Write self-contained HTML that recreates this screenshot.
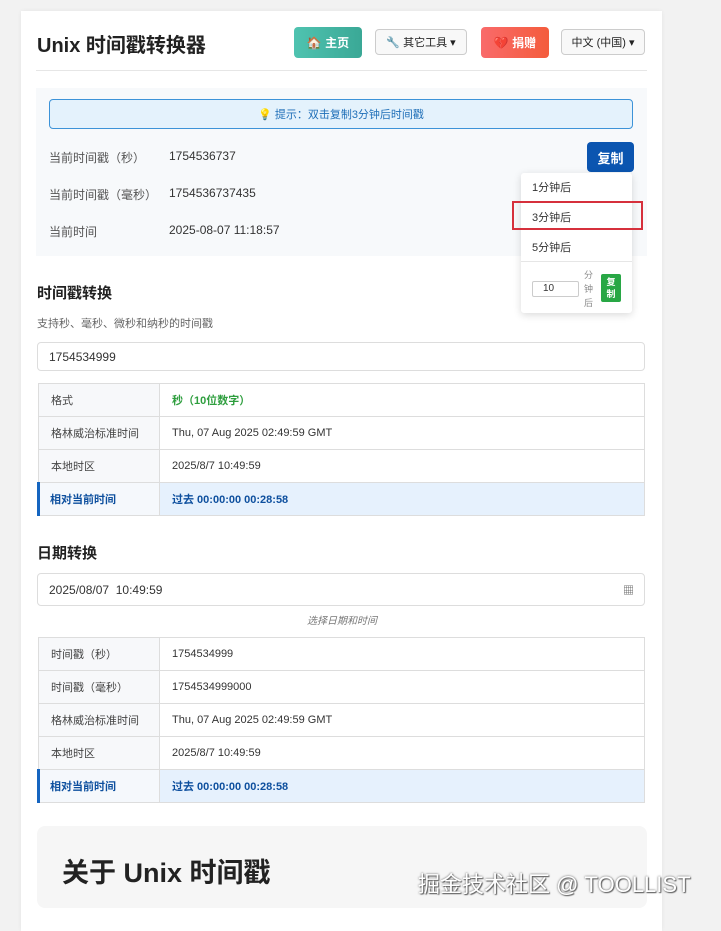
<!DOCTYPE html>
<html><head><meta charset="utf-8"><style>
*{box-sizing:border-box;margin:0;padding:0}
body{width:721px;height:919px;background:#f2f2f2;font-family:"Liberation Sans","Noto Sans CJK SC",sans-serif;position:relative;overflow:hidden;color:#333}
.a{position:absolute}
.card{left:21px;top:11px;width:641px;height:920px;background:#fff;box-shadow:0 0 4px rgba(0,0,0,.06)}
.btn{position:absolute;display:flex;align-items:center;justify-content:center;font-size:12px;border-radius:4px}
.lab{position:absolute;left:49px;font-size:12px;color:#555}
.val{position:absolute;left:169px;font-size:12px;color:#333}
table{position:absolute;left:37px;width:608px;border-collapse:collapse;font-size:11px}
td{border:1px solid #ddd;height:33px;padding:0 12px;color:#333}
td:first-child{width:121px;background:#f7f8fa;color:#444}
tr.hl td{background:#e6f1fd;color:#0d4f9e;font-weight:bold}
tr.hl td:first-child{border-left:3px solid #1565c0;background:#f5f8fc;padding-left:10px}
.inp{position:absolute;left:37px;width:608px;border:1px solid #ddd;border-radius:4px;font-size:12px;padding-left:11px;display:flex;align-items:center}
.dd div{font-size:11px;color:#333}
</style></head><body>
<div class="a card"></div>
<div class="a" style="left:37px;top:29px;font-size:20px;font-weight:bold;color:#222">Unix 时间戳转换器</div>
<div class="btn" style="left:294px;top:27px;width:68px;height:31px;background:linear-gradient(90deg,#4fc3b0,#3aa896);color:#fff;font-weight:bold">🏠 主页</div>
<div class="btn" style="left:375px;top:29px;width:92px;height:26px;border:1px solid #ccc;background:#f8f8f8;color:#222;font-size:11px">🔧 其它工具 ▾</div>
<div class="btn" style="left:481px;top:27px;width:68px;height:31px;background:linear-gradient(90deg,#f96a6a,#f45c3c);color:#fff;font-weight:bold">💔 捐赠</div>
<div class="btn" style="left:561px;top:29px;width:84px;height:26px;border:1px solid #ccc;background:#f8f8f8;color:#222;font-size:11px">中文 (中国) ▾</div>
<div class="a" style="left:36px;top:70px;width:611px;height:1px;background:#e6e6e6"></div>
<div class="a" style="left:36px;top:88px;width:611px;height:168px;background:#f7f9fb"></div>
<div class="a" style="left:49px;top:99px;width:584px;height:30px;background:#e4f2fc;border:1px solid #3d93d8;border-radius:4px;display:flex;align-items:center;justify-content:center;font-size:11px;color:#1f6fb8">💡 提示：双击复制3分钟后时间戳</div>
<div class="lab" style="top:149px">当前时间戳（秒）</div><div class="val" style="top:149px">1754536737</div>
<div class="lab" style="top:186px">当前时间戳（毫秒）</div><div class="val" style="top:186px">1754536737435</div>
<div class="lab" style="top:223px">当前时间</div><div class="val" style="top:223px">2025-08-07 11:18:57</div>
<div class="btn" style="left:587px;top:142px;width:47px;height:30px;background:#0b55b0;color:#fff;font-size:13px;font-weight:bold">复制</div>
<div class="a dd" style="left:521px;top:173px;width:111px;height:140px;background:#fff;box-shadow:0 2px 8px rgba(0,0,0,.15);border-radius:3px">
<div class="a" style="left:11px;top:6px">1分钟后</div>
<div class="a" style="left:11px;top:36px">3分钟后</div>
<div class="a" style="left:11px;top:66px">5分钟后</div>
<div class="a" style="left:0;top:88px;width:111px;height:1px;background:#e6e6e6"></div>
<div class="a" style="left:11px;top:108px;width:47px;height:16px;border:1px solid #ccc;border-radius:2px;font-size:10px;padding-left:10px;line-height:14px">10</div>
<div class="a" style="left:63px;top:95px;font-size:9px;color:#888;width:10px;line-height:14px">分钟后</div>
<div class="a" style="left:80px;top:101px;width:20px;height:28px;background:#28a745;color:#fff;font-size:9px;font-weight:bold;line-height:12px;text-align:center;padding:2px 4px 0;border-radius:2px;word-break:break-all">复制</div>
</div>
<div class="a" style="left:512px;top:201px;width:131px;height:29px;border:2px solid #d6303c"></div>
<div class="a" style="left:37px;top:282px;font-size:15px;font-weight:bold;color:#222">时间戳转换</div>
<div class="a" style="left:37px;top:315px;font-size:11px;color:#666">支持秒、毫秒、微秒和纳秒的时间戳</div>
<div class="inp" style="top:342px;height:29px">1754534999</div>
<table style="top:383px">
<tr><td>格式</td><td style="color:#2e9e3e;font-weight:bold">秒（10位数字）</td></tr>
<tr><td>格林威治标准时间</td><td>Thu, 07 Aug 2025 02:49:59 GMT</td></tr>
<tr><td>本地时区</td><td>2025/8/7 10:49:59</td></tr>
<tr class="hl"><td>相对当前时间</td><td>过去 00:00:00 00:28:58</td></tr>
</table>
<div class="a" style="left:37px;top:542px;font-size:15px;font-weight:bold;color:#222">日期转换</div>
<div class="inp" style="top:573px;height:33px">2025/08/07&nbsp; 10:49:59<span style="position:absolute;right:10px;font-size:11px;color:#555">▦</span></div>
<div class="a" style="left:0;width:684px;top:612px;font-size:10px;color:#777;font-style:italic;text-align:center">选择日期和时间</div>
<table style="top:637px">
<tr><td>时间戳（秒）</td><td>1754534999</td></tr>
<tr><td>时间戳（毫秒）</td><td>1754534999000</td></tr>
<tr><td>格林威治标准时间</td><td>Thu, 07 Aug 2025 02:49:59 GMT</td></tr>
<tr><td>本地时区</td><td>2025/8/7 10:49:59</td></tr>
<tr class="hl"><td>相对当前时间</td><td>过去 00:00:00 00:28:58</td></tr>
</table>
<div class="a" style="left:37px;top:826px;width:610px;height:82px;background:#f6f6f6;border-radius:8px"></div>
<div class="a" style="left:62px;top:851px;font-size:27px;font-weight:bold;color:#222">关于 Unix 时间戳</div>
<div class="a" style="left:418px;top:867px;font-size:22px;color:#fff;text-shadow:0 0 2px #555,1px 1px 1px #666">掘金技术社区 @ TOOLLIST</div>
</body></html>
